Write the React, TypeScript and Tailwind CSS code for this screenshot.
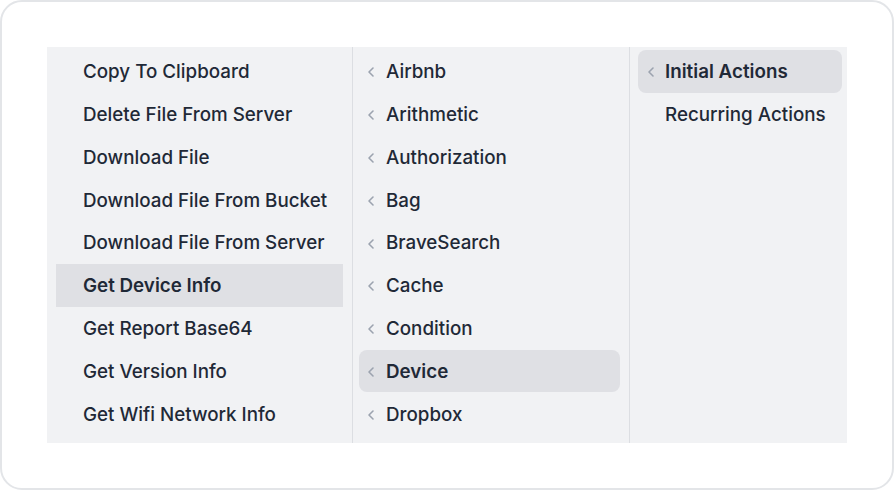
import React from "react";

const actions = [
    "Copy To Clipboard",
    "Delete File From Server",
    "Download File",
    "Download File From Bucket",
    "Download File From Server",
    "Get Device Info",
    "Get Report Base64",
    "Get Version Info",
    "Get Wifi Network Info",
];

const groups = ["Airbnb", "Arithmetic", "Authorization", "Bag", "BraveSearch", "Cache", "Condition", "Device", "Dropbox"];

function Chevron() {
    return (
        <svg viewBox="0 0 8 12" className="h-[12px] w-[8px] shrink-0 text-[#9ca3af]" fill="none" stroke="currentColor" strokeWidth="1.6" strokeLinecap="round" strokeLinejoin="round">
            <path d="M6 2 L2 6 L6 10" />
        </svg>
    );
}

export default function App() {
    return (
        <div className="h-[490px] w-[894px] bg-white" style={{ fontFamily: "Inter, 'Noto Sans', sans-serif" }}>
            <div className="h-full w-full rounded-[22px] border-2 border-[#e3e5e8] bg-white p-[45px]">
                <div className="flex h-[396px] w-[800px] bg-[#f1f2f4] text-[18.8px] font-medium text-[#1f2937]">
                    <div className="w-[306px] border-r border-[#dcdee2] pt-[3px]">
                        {actions.map((a) => {
                            const active = a === "Get Device Info";
                            return (
                                <div
                                    key={a}
                                    className={`mx-[9px] flex h-[42.8px] items-center pl-[27px] pt-[2px] ${active ? "bg-[#dfe0e4] font-semibold" : ""}`}
                                >
                                    {a}
                                </div>
                            );
                        })}
                    </div>
                    <div className="w-[277px] border-r border-[#dcdee2] pl-[6px] pr-[9px] pt-[3px]">
                        {groups.map((g) => {
                            const active = g === "Device";
                            return (
                                <div
                                    key={g}
                                    className={`flex h-[42.8px] items-center gap-[11px] rounded-lg pl-[8px] pt-[2px] ${active ? "bg-[#dfe0e4] font-semibold" : ""}`}
                                >
                                    <Chevron />
                                    {g}
                                </div>
                            );
                        })}
                    </div>
                    <div className="flex-1 pl-[8px] pr-[5px] pt-[3px]">
                        <div className="flex h-[42.8px] items-center gap-[10px] rounded-lg bg-[#dfe0e4] pl-[9px] pt-[2px] font-semibold">
                            <Chevron />
                            Initial Actions
                        </div>
                        <div className="flex h-[42.8px] items-center pl-[27px] pt-[2px]">Recurring Actions</div>
                    </div>
                </div>
            </div>
        </div>
    );
}
